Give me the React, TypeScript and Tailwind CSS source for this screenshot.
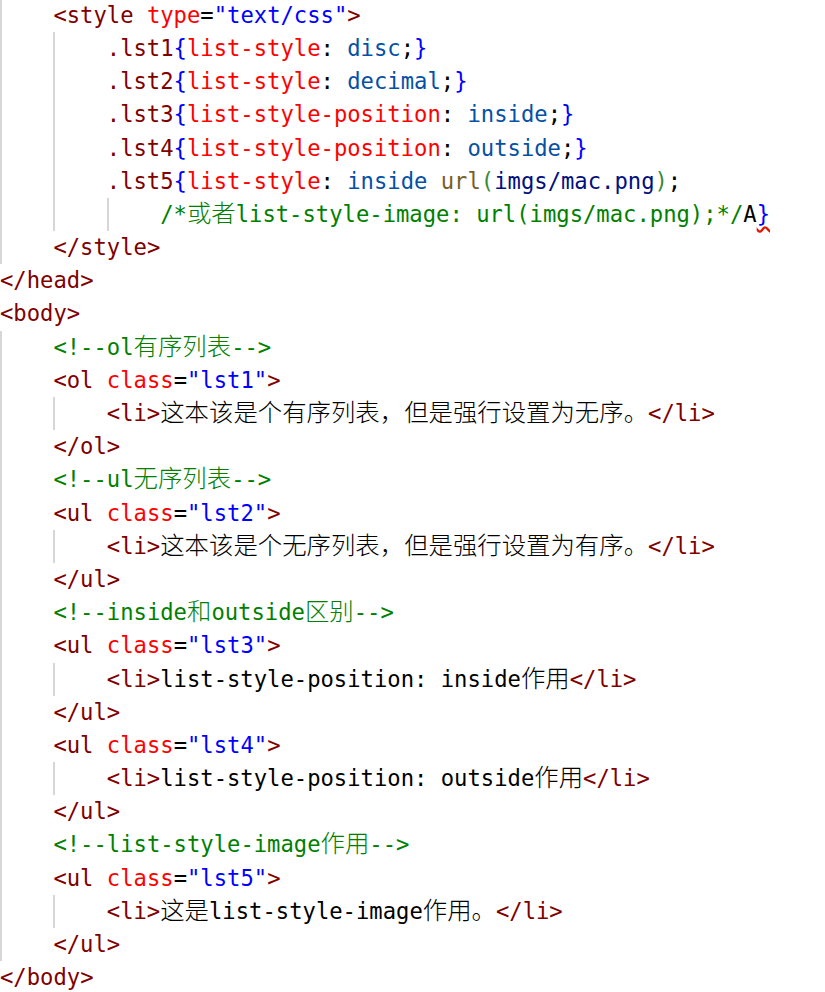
import React from "react";

type Tok = [string, string, boolean?];

const TAG = "#800000";
const ATTR = "#ff0000";
const VAL = "#0000ff";
const K = "#000000";
const CV = "#0451a5";
const CMT = "#008000";
const FN = "#795e26";
const PAR = "#3a8a3a";
const URL = "#001080";

const tagOpen = (name: string, cls: string): Tok[] => [
  [TAG, "<" + name],
  [K, " "],
  [ATTR, "class"],
  [K, "="],
  [VAL, '"' + cls + '"'],
  [TAG, ">"],
];

const rule = (sel: string, prop: string, value: string): Tok[] => [
  [TAG, sel],
  [VAL, "{"],
  [ATTR, prop],
  [K, ": "],
  [CV, value],
  [K, ";"],
  [VAL, "}"],
];

const li = (text: string): Tok[] => [
  [TAG, "<li>"],
  [K, text],
  [TAG, "</li>"],
];

const lines: { indent: number; toks: Tok[] }[] = [
  {
    indent: 1,
    toks: [
      [TAG, "<style"],
      [K, " "],
      [ATTR, "type"],
      [K, "="],
      [VAL, '"text/css"'],
      [TAG, ">"],
    ],
  },
  { indent: 2, toks: rule(".lst1", "list-style", "disc") },
  { indent: 2, toks: rule(".lst2", "list-style", "decimal") },
  { indent: 2, toks: rule(".lst3", "list-style-position", "inside") },
  { indent: 2, toks: rule(".lst4", "list-style-position", "outside") },
  {
    indent: 2,
    toks: [
      [TAG, ".lst5"],
      [VAL, "{"],
      [ATTR, "list-style"],
      [K, ": "],
      [CV, "inside"],
      [K, " "],
      [FN, "url"],
      [PAR, "("],
      [URL, "imgs/mac.png"],
      [PAR, ")"],
      [K, ";"],
    ],
  },
  {
    indent: 3,
    toks: [
      [CMT, "/*或者list-style-image: url(imgs/mac.png);*/"],
      [K, "A"],
      [VAL, "}", true],
    ],
  },
  { indent: 1, toks: [[TAG, "</style>"]] },
  { indent: 0, toks: [[TAG, "</head>"]] },
  { indent: 0, toks: [[TAG, "<body>"]] },
  { indent: 1, toks: [[CMT, "<!--ol有序列表-->"]] },
  { indent: 1, toks: tagOpen("ol", "lst1") },
  { indent: 2, toks: li("这本该是个有序列表，但是强行设置为无序。") },
  { indent: 1, toks: [[TAG, "</ol>"]] },
  { indent: 1, toks: [[CMT, "<!--ul无序列表-->"]] },
  { indent: 1, toks: tagOpen("ul", "lst2") },
  { indent: 2, toks: li("这本该是个无序列表，但是强行设置为有序。") },
  { indent: 1, toks: [[TAG, "</ul>"]] },
  { indent: 1, toks: [[CMT, "<!--inside和outside区别-->"]] },
  { indent: 1, toks: tagOpen("ul", "lst3") },
  { indent: 2, toks: li("list-style-position: inside作用") },
  { indent: 1, toks: [[TAG, "</ul>"]] },
  { indent: 1, toks: tagOpen("ul", "lst4") },
  { indent: 2, toks: li("list-style-position: outside作用") },
  { indent: 1, toks: [[TAG, "</ul>"]] },
  { indent: 1, toks: [[CMT, "<!--list-style-image作用-->"]] },
  { indent: 1, toks: tagOpen("ul", "lst5") },
  { indent: 2, toks: li("这是list-style-image作用。") },
  { indent: 1, toks: [[TAG, "</ul>"]] },
  { indent: 0, toks: [[TAG, "</body>"]] },
];

// split a token into latin / CJK runs so CJK can be full-width
const CJK = /([\u3000-\u303f\u4e00-\u9fff\uff00-\uffef]+)/;

function Text({ text }: { text: string }) {
  const parts = text.split(CJK).filter((p) => p.length > 0);
  return (
    <>
      {parts.map((p, i) =>
        CJK.test(p) ? (
          <span
            key={i}
            className="text-[24.4px] leading-none font-['Noto_Sans_CJK_SC',sans-serif] font-light"
          >
            {p}
          </span>
        ) : (
          <span key={i}>{p}</span>
        )
      )}
    </>
  );
}

export default function App() {
  return (
    <div className="w-[825px] h-[992px] bg-white overflow-hidden">
      <div className="mt-[-1.2px] font-['DejaVu_Sans_Mono','Liberation_Mono',monospace] text-[22.2px]">
        {lines.map((line, i) => (
          <div key={i} className="flex items-center h-[33.2px] whitespace-pre">
            {Array.from({ length: line.indent }).map((_, j) => (
              <span
                key={j}
                className="w-[53.4px] h-full shrink-0 border-l-2 border-[#d6d6d6]"
              />
            ))}
            {line.toks.map(([color, text, squiggle], j) => (
              <span
                key={j}
                style={{ color }}
                className={
                  squiggle
                    ? "underline decoration-wavy decoration-[#e51400] underline-offset-4"
                    : ""
                }
              >
                <Text text={text} />
              </span>
            ))}
          </div>
        ))}
      </div>
    </div>
  );
}
